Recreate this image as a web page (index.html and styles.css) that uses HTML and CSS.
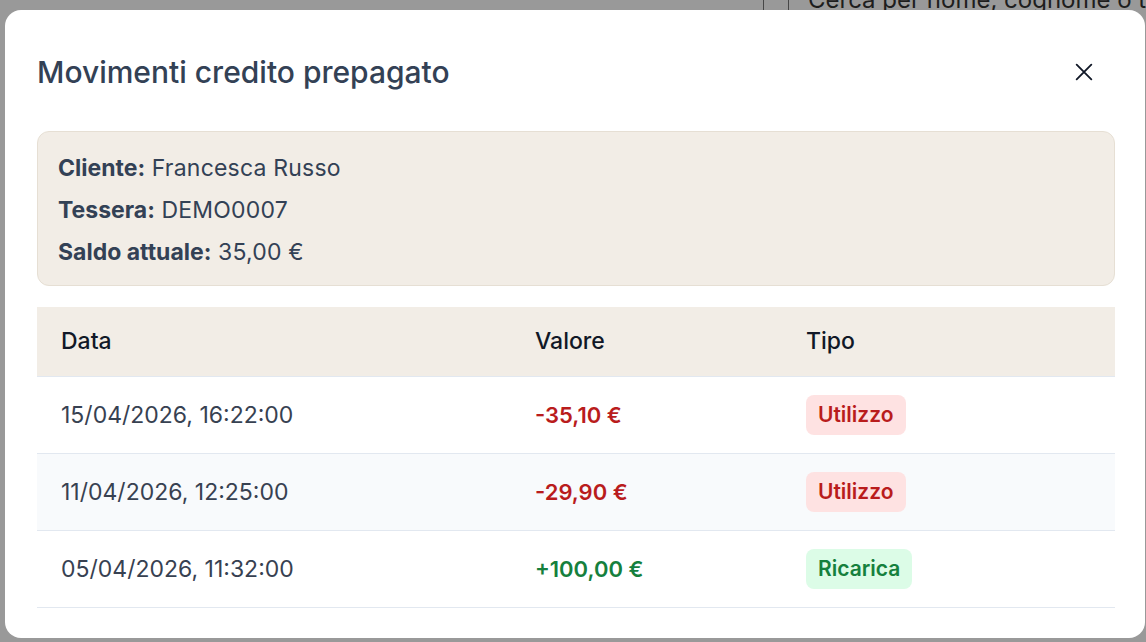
FILE: index.html
```html
<!DOCTYPE html>
<html lang="it">
<head>
    <meta charset="UTF-8">
    <meta name="viewport" content="width=device-width, initial-scale=1.0">
    <title>Clienti - Credito prepagato</title>
    <link rel="stylesheet" href="styles.css">
</head>
<body>
    <!-- pagina sotto il modale -->
    <div class="page">
        <div class="toolbar">
            <div class="search">
                <span class="search-addon"></span>
                <span class="search-text">Cerca per nome, cognome o tessera</span>
            </div>
        </div>
    </div>

    <div class="overlay">
        <div class="modal">
            <div class="modal-header">
                <h2>Movimenti credito prepagato</h2>
                <button class="close-btn" type="button" aria-label="Chiudi">
                    <svg width="22" height="22" viewBox="0 0 24 24" fill="none" stroke="currentColor" stroke-width="2" stroke-linecap="round">
                        <path d="M4 4l16 16M20 4L4 20"/>
                    </svg>
                </button>
            </div>

            <div class="info-box">
                <p><b>Cliente:</b> Francesca Russo</p>
                <p><b>Tessera:</b> DEMO0007</p>
                <p><b>Saldo attuale:</b> 35,00 €</p>
            </div>

            <table class="movements">
                <thead>
                    <tr>
                        <th class="col-date">Data</th>
                        <th class="col-value">Valore</th>
                        <th>Tipo</th>
                    </tr>
                </thead>
                <tbody>
                    <tr>
                        <td>15/04/2026, 16:22:00</td>
                        <td class="amount neg">-35,10 €</td>
                        <td><span class="badge use">Utilizzo</span></td>
                    </tr>
                    <tr>
                        <td>11/04/2026, 12:25:00</td>
                        <td class="amount neg">-29,90 €</td>
                        <td><span class="badge use">Utilizzo</span></td>
                    </tr>
                    <tr>
                        <td>05/04/2026, 11:32:00</td>
                        <td class="amount pos">+100,00 €</td>
                        <td><span class="badge topup">Ricarica</span></td>
                    </tr>
                </tbody>
            </table>
        </div>
    </div>
</body>
</html>
```

FILE: styles.css
```css
* { box-sizing: border-box; }
html, body { margin: 0; height: 100%; overflow: hidden; }
body { font-family: Inter, "Noto Sans", sans-serif; background: #fff; color: #334155; }

.page { height: 100%; }
.toolbar { display: flex; justify-content: flex-end; margin-top: -16px; }
.search {
    display: flex;
    width: 383px;
    height: 44px;
    border-left: 1px solid #777;
    white-space: nowrap;
    overflow: hidden;
}
.search-addon { width: 25px; flex: none; border-right: 1px solid #777; }
.search-text {
    padding-left: 19px;
    font-size: 24px;
    line-height: 32px;
    color: #333;
}

.overlay {
    position: fixed;
    inset: 0;
    background: rgba(0, 0, 0, 0.4);
}

.modal {
    width: 1140px;
    height: 628px;
    margin: 10px 0 0 5px;
    padding: 32px 30px 0 32px;
    background: #fff;
    border-radius: 16px;
    overflow: hidden;
}

.modal-header {
    display: flex;
    justify-content: space-between;
    align-items: center;
    height: 60px;
    margin-bottom: 29px;
}
.modal-header h2 {
    margin: 0;
    font-size: 30px;
    font-weight: 500;
    color: #334155;
}
.close-btn {
    width: 40px;
    height: 40px;
    margin-right: 11px;
    border: none;
    background: none;
    color: #111827;
    display: flex;
    align-items: center;
    justify-content: center;
    padding: 0;
    cursor: pointer;
}

.info-box {
    background: #f2ede6;
    border: 1px solid #e6dfd4;
    border-radius: 12px;
    padding: 15px 20px 12px;
    margin-bottom: 21px;
}
.info-box p {
    margin: 0;
    font-size: 23px;
    line-height: 42px;
    color: #334155;
    letter-spacing: 0.2px;
}
.info-box b { font-weight: 700; letter-spacing: 0; }

.movements {
    width: 100%;
    border-collapse: collapse;
}
.movements th {
    background: #f2ede6;
    height: 69px;
    padding: 0 24px;
    text-align: left;
    font-size: 23px;
    font-weight: 500;
    color: #111827;
    border-bottom: 1px solid #e2e8f0;
}
.col-date { width: 474px; }
.col-value { width: 271px; }
.movements td {
    height: 77px;
    padding: 0 24px;
    font-size: 23px;
    color: #374151;
    border-bottom: 1px solid #e2e8f0;
}
.movements tbody tr:nth-child(even) td { background: #f8fafc; }

.amount { font-weight: 600; font-size: 22px !important; }
.amount.neg { color: #b91c1c !important; }
.amount.pos { color: #15803d !important; }

.badge {
    display: inline-block;
    padding: 0 12px;
    height: 40px;
    line-height: 40px;
    border-radius: 8px;
    font-size: 21px;
    font-weight: 600;
}
.badge.use { background: #fee2e2; color: #b91c1c; }
.badge.topup { background: #dcfce7; color: #15803d; }
```
